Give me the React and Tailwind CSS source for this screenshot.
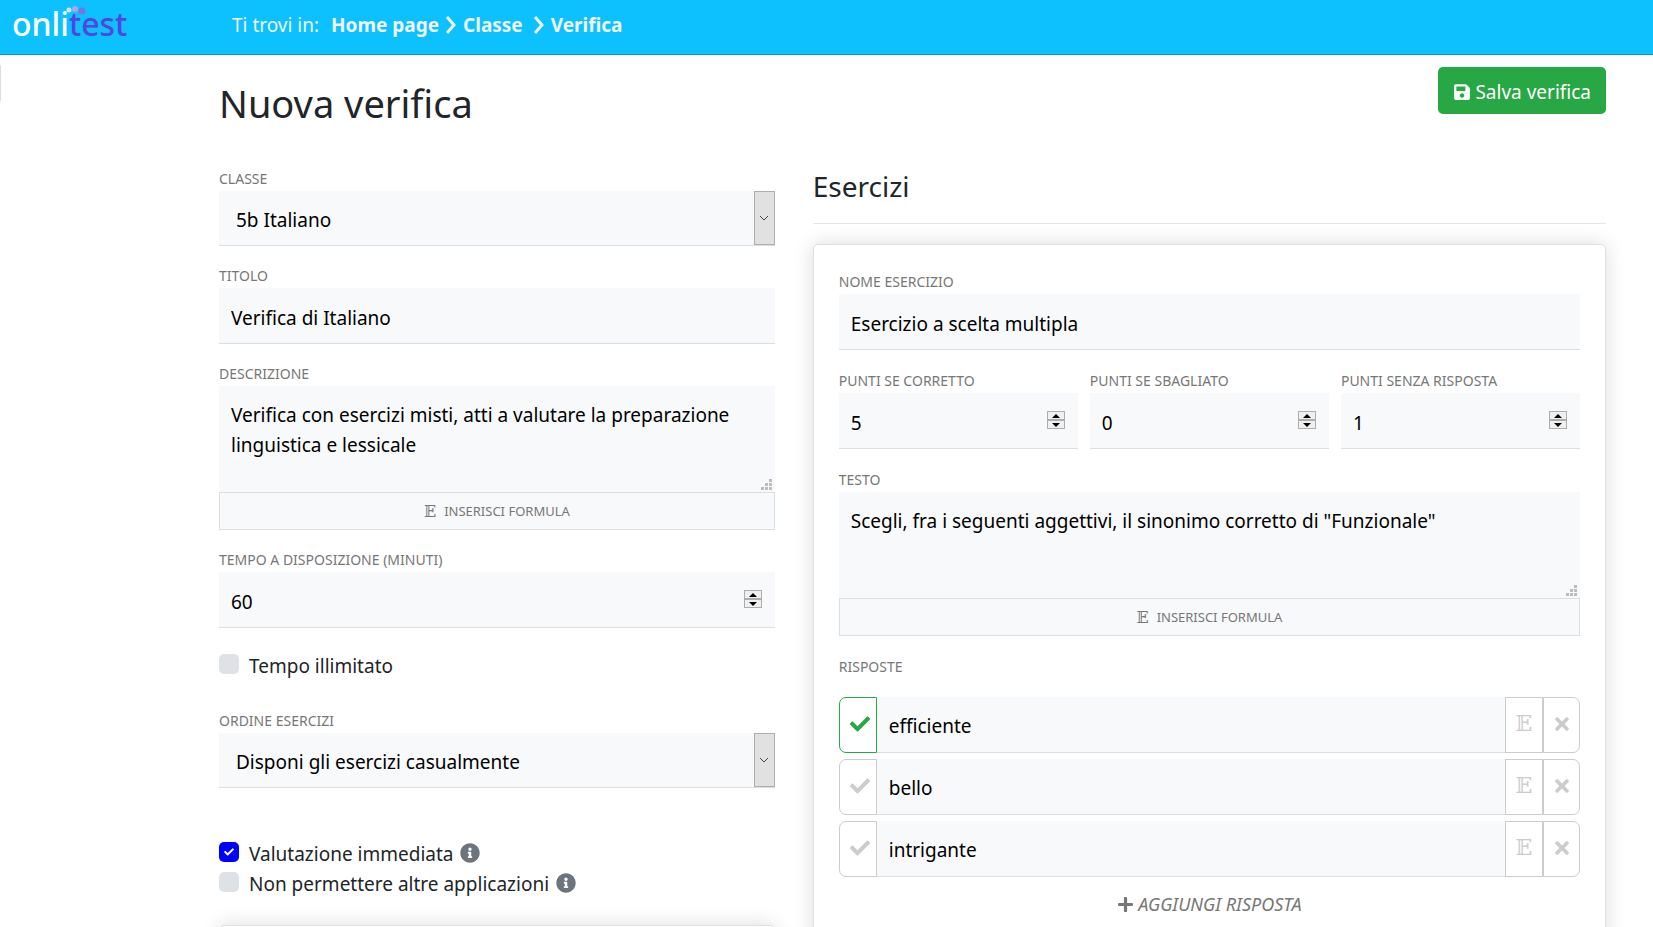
import React, { useId, useState } from 'react';
import { FaCheck, FaInfoCircle, FaPlus, FaSave, FaTimes } from 'react-icons/fa';

const LABEL = 'block pt-px text-[14px] leading-[19px] uppercase text-[#777] whitespace-nowrap';
const FIELD = 'block w-full rounded-none border-b border-[#dcdfe2] bg-[#f8f9fa] px-3 pt-1 text-[19px] text-black outline-none';

function Logo() {
  return (
    <a href="#home" aria-label="onlitest" className="relative block w-[116px] shrink-0 text-[32px] leading-[32px] font-medium whitespace-nowrap text-white">
      onli<span className="text-[#4f46e5]">test</span>
      <svg className="absolute -top-[5px] left-[50px]" width="28" height="16" viewBox="0 0 28 16" aria-hidden="true">
        <circle cx="7" cy="7" r="2.5" fill="#d9e3fb" />
        <circle cx="13" cy="6" r="3" fill="#a9a5ec" />
        <circle cx="20" cy="8" r="3.5" fill="#7a73e4" />
      </svg>
    </a>
  );
}

function Chevron() {
  return (
    <svg width="12" height="20" viewBox="0 0 12 20" fill="none" stroke="currentColor" strokeWidth="3" aria-hidden="true">
      <path d="M2 2l7 8-7 8" />
    </svg>
  );
}

function SelectField({ label, options }) {
  const id = useId();
  return (
    <div>
      <label htmlFor={id} className={LABEL}>{label}</label>
      <div className="relative mt-[3px]">
        <select id={id} className={`${FIELD} h-[55px] appearance-none pl-[17px]`}>
          {options.map((o) => <option key={o}>{o}</option>)}
        </select>
        <span className="pointer-events-none absolute top-0 right-0 flex h-[54px] w-[21px] items-center justify-center border border-[#adadad] bg-[#e1e1e1]">
          <svg width="10" height="6" viewBox="0 0 10 6" fill="none" stroke="#444" aria-hidden="true">
            <path d="M1 1l4 4 4-4" />
          </svg>
        </span>
      </div>
    </div>
  );
}

function TextField({ label, value }) {
  const id = useId();
  return (
    <div>
      <label htmlFor={id} className={LABEL}>{label}</label>
      <input id={id} type="text" defaultValue={value} className={`${FIELD} mt-[3px] h-[56px]`} />
    </div>
  );
}

function NumberField({ label, value }) {
  const id = useId();
  const [n, setN] = useState(value);
  return (
    <div className="min-w-0">
      <label htmlFor={id} className={LABEL}>{label}</label>
      <div className="relative mt-[3px]">
        <input
          id={id}
          type="number"
          value={n}
          onChange={(e) => setN(e.target.value)}
          className={`${FIELD} h-[56px] [appearance:textfield] [&::-webkit-inner-spin-button]:appearance-none`}
        />
        <div className="absolute top-[18px] right-[13px] flex w-[18px] flex-col gap-[2px] border border-[#adadad] bg-[#adadad]">
          <button type="button" aria-label="Aumenta" onClick={() => setN(Number(n) + 1)} className="flex h-[7px] items-center justify-center bg-[#f0f0f0]">
            <svg width="8" height="4" viewBox="0 0 8 4" aria-hidden="true"><path d="M4 0l4 4H0z" /></svg>
          </button>
          <button type="button" aria-label="Diminuisci" onClick={() => setN(Number(n) - 1)} className="flex h-[7px] items-center justify-center bg-[#f0f0f0]">
            <svg width="8" height="4" viewBox="0 0 8 4" aria-hidden="true"><path d="M4 4L0 0h8z" /></svg>
          </button>
        </div>
      </div>
    </div>
  );
}

function FormulaArea({ label, value }) {
  const id = useId();
  return (
    <div>
      <label htmlFor={id} className={LABEL}>{label}</label>
      <div className="relative mt-[3px]">
        <textarea id={id} defaultValue={value} className="block h-[106px] w-full resize-none bg-[#f8f9fa] px-3 py-[14px] text-[19px] leading-[30px] text-black outline-none" />
        <svg className="pointer-events-none absolute right-[3px] bottom-[2px]" width="11" height="11" viewBox="0 0 11 11" fill="#bcbcbc" aria-hidden="true">
          <path d="M8 0h3v3H8zM4 4h3v3H4zM8 4h3v3H8zM0 8h3v3H0zM4 8h3v3H4zM8 8h3v3H8z" />
        </svg>
      </div>
      <button type="button" className="flex h-[38px] w-full items-center justify-center gap-2 border border-[#dcdfe2] bg-[#f8f9fa] pt-px text-[13px] text-[#777] uppercase">
        <span className="font-['DejaVu_Serif','DejaVu_Sans',serif] text-[16px]">𝔼</span>
        Inserisci formula
      </button>
    </div>
  );
}

function CheckField({ label, checked, info }) {
  const [on, setOn] = useState(Boolean(checked));
  return (
    <div className="flex h-[30px] items-center">
      <label className="flex items-center gap-[10px] text-[19px] leading-[30px] text-[#212529]">
        <span className="relative mb-1 block size-5">
          <input
            type="checkbox"
            checked={on}
            onChange={(e) => setOn(e.target.checked)}
            className="block size-5 appearance-none rounded-[5px] bg-[#dee2e6] checked:bg-[#0000ff]"
          />
          {on && <FaCheck size={10} className="pointer-events-none absolute top-[5px] left-[5px] text-white" />}
        </span>
        {label}
      </label>
      {info && <FaInfoCircle size={20} className="mb-[2px] ml-[7px] text-[#6c757d]" />}
    </div>
  );
}

function Answer({ text, correct }) {
  return (
    <div className="flex h-[56px]">
      <button
        type="button"
        aria-label="Risposta corretta"
        className={`flex w-[38px] shrink-0 items-center justify-center rounded-l-[7px] border bg-white pb-[3px] pl-1 ${correct ? 'border-[#28a745] text-[#28a745]' : 'border-[#ccc] text-[#ccc]'}`}
      >
        <FaCheck size={20} />
      </button>
      <input type="text" aria-label="Risposta" defaultValue={text} className={`${FIELD} min-w-0 flex-1`} />
      <button type="button" aria-label="Inserisci formula" className="w-[38px] shrink-0 border border-[#ccc] bg-white pb-1 font-['DejaVu_Serif','DejaVu_Sans',serif] text-[22px] text-[#ccc]">𝔼</button>
      <button type="button" aria-label="Elimina risposta" className="flex w-[37px] shrink-0 items-center justify-center rounded-r-[7px] border border-[#ccc] bg-white pb-[3px] text-[#ccc]">
        <FaTimes size={20} />
      </button>
    </div>
  );
}

export default function App() {
  return (
    <div className="h-screen overflow-hidden bg-white font-['Noto_Sans','Open_Sans',sans-serif] text-[#212529]">
      <header className="flex h-[55px] items-start border-b border-[#0998cc] bg-[#0dc1ff] px-3 pt-[8px]">
        <Logo />
        <nav className="ml-[104px] flex items-center text-[19px] leading-[34px] text-[#f0f4f6]">
          <span className="mr-3">Ti trovi in:</span>
          <a href="#home" className="mr-[6px] font-bold">Home page</a>
          <Chevron />
          <a href="#classe" className="mr-[10px] ml-[6px] font-bold">Classe</a>
          <Chevron />
          <a href="#verifica" className="ml-[6px] font-bold">Verifica</a>
        </nav>
      </header>

      <div className="flex">
        <aside className="mt-[10px] h-[36px] w-px shrink-0 rounded-r-sm bg-[#ddd]" />
        <main className="min-w-0 flex-1 pt-3 pr-[47px] pl-[218px]">
          <div className="flex items-start justify-between">
            <h1 className="mt-2 text-[38px] leading-[56px] font-normal">Nuova verifica</h1>
            <button type="button" className="flex h-[47px] items-center gap-1 rounded-[5px] bg-[#28a745] px-[15px] pt-[3px] text-[19px] text-white">
              <FaSave size={18} />
              Salva verifica
            </button>
          </div>

          <div className="mt-[37px] grid grid-cols-12 gap-x-[38px]">
            <section className="col-span-5">
              <div className="flex flex-col gap-[19px]">
                <SelectField label="Classe" options={['5b Italiano']} />
                <TextField label="Titolo" value="Verifica di Italiano" />
                <FormulaArea label="Descrizione" value="Verifica con esercizi misti, atti a valutare la preparazione linguistica e lessicale" />
                <NumberField label="Tempo a disposizione (minuti)" value={60} />
              </div>
              <div className="mt-[23px] mb-[29px]">
                <CheckField label="Tempo illimitato" />
              </div>
              <SelectField label="Ordine esercizi" options={['Disponi gli esercizi casualmente']} />
              <div className="mt-[51px]">
                <CheckField label="Valutazione immediata" checked info />
                <CheckField label="Non permettere altre applicazioni" info />
              </div>
              <div className="mt-[26px] h-20 rounded-[5px] border border-[#dfdfdf] shadow-[0_0_20px_rgba(0,0,0,0.14)]" />
            </section>

            <section className="col-span-7">
              <h2 className="border-b border-[#e5e5e5] pb-[18px] text-[28px] leading-[37px] font-normal">Esercizi</h2>
              <div className="mt-[20px] rounded-[5px] border border-[#dfdfdf] px-[25px] pt-[26px] pb-10 shadow-[0_0_20px_rgba(0,0,0,0.14)]">
                <div className="flex flex-col gap-[20px]">
                  <TextField label="Nome esercizio" value="Esercizio a scelta multipla" />
                  <div className="grid grid-cols-3 gap-3">
                    <NumberField label="Punti se corretto" value={5} />
                    <NumberField label="Punti se sbagliato" value={0} />
                    <NumberField label="Punti senza risposta" value={1} />
                  </div>
                  <FormulaArea label="Testo" value={'Scegli, fra i seguenti aggettivi, il sinonimo corretto di "Funzionale"'} />
                  <h3 className={LABEL}>Risposte</h3>
                </div>
                <div className="mt-[21px] flex flex-col gap-[6px]">
                  <Answer text="efficiente" correct />
                  <Answer text="bello" />
                  <Answer text="intrigante" />
                </div>
                <button type="button" className="mx-auto mt-[11px] flex items-center gap-1 text-[18px] leading-[32px] text-[#777] uppercase italic">
                  <FaPlus size={17} />
                  Aggiungi risposta
                </button>
              </div>
            </section>
          </div>
        </main>
      </div>
    </div>
  );
}
